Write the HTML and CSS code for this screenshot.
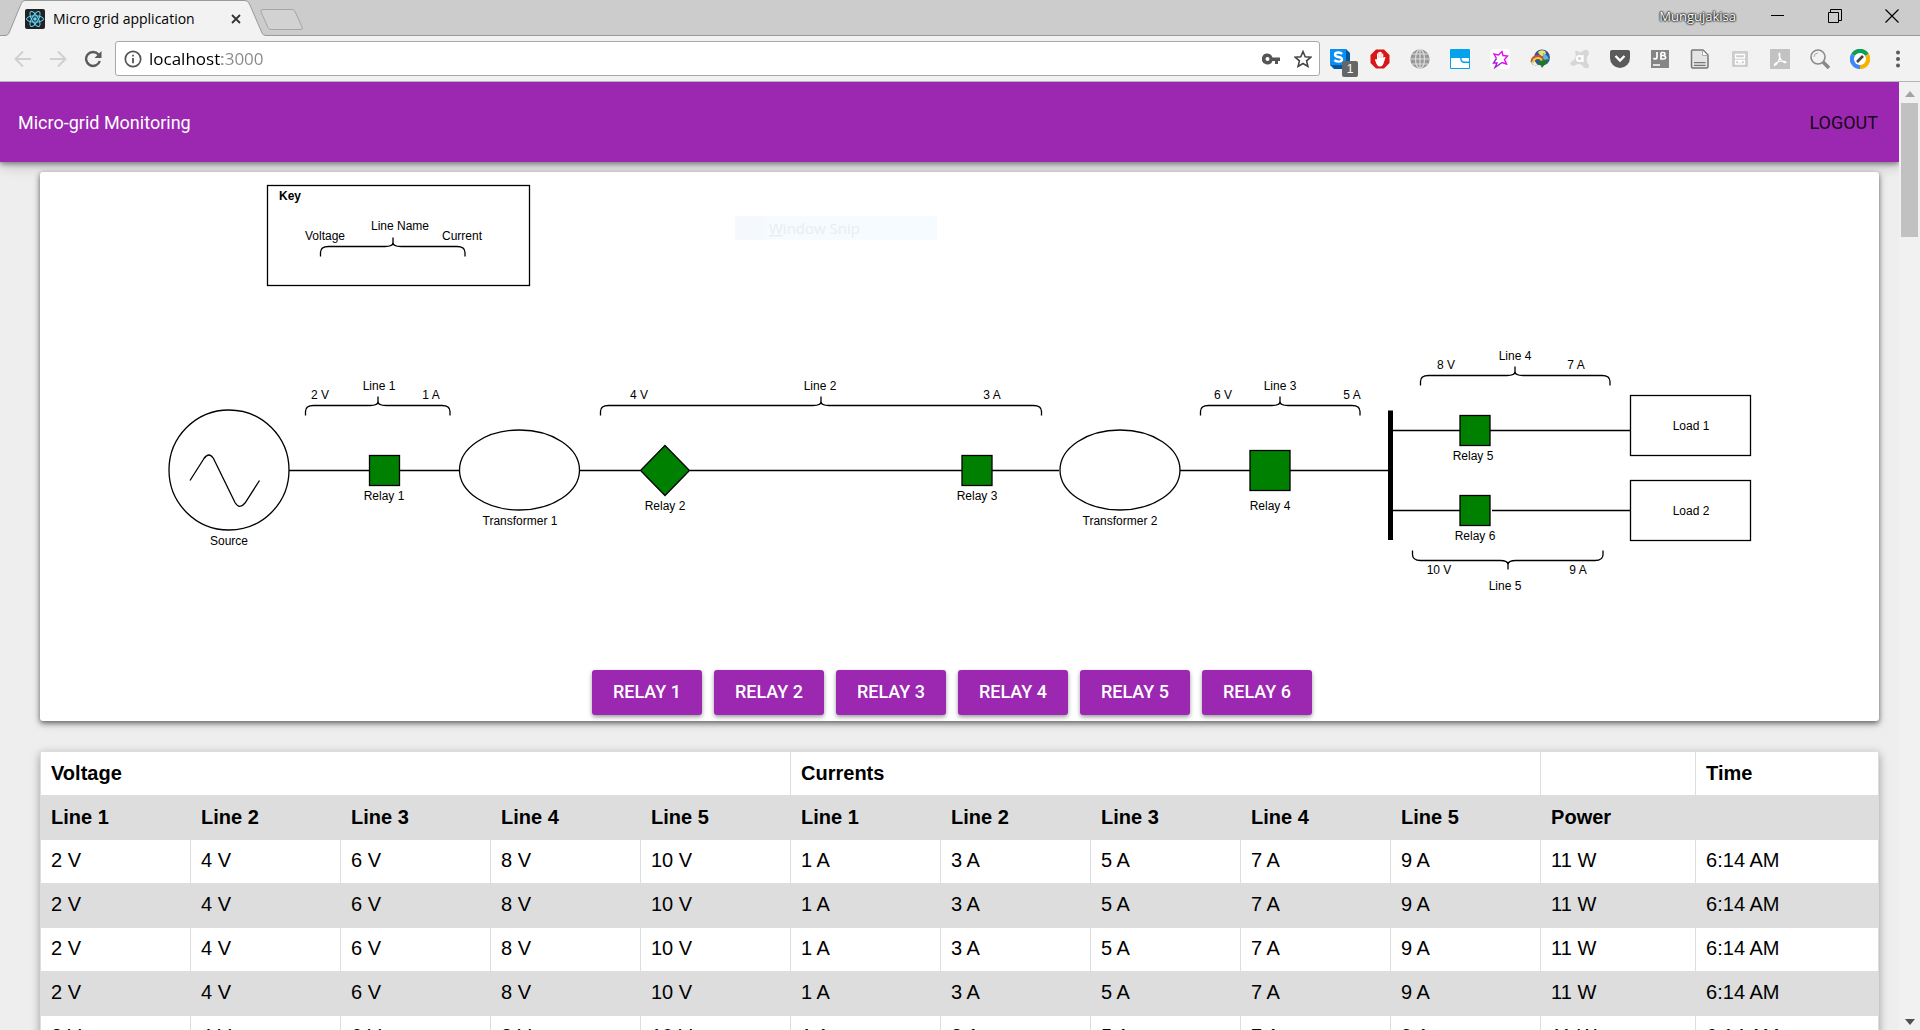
FILE: index.html
```html
<!DOCTYPE html>
<html lang="en">
<head>
<meta charset="utf-8">
<title>Micro grid application</title>
<link rel="stylesheet" href="styles.css">
</head>
<body>
<header class="browser">
  <div class="tabstrip">
    <div class="tab">
      <svg class="tab-shape" width="272" height="36" viewBox="0 0 272 36"><path d="M0 36V35.500H5Q8 35.500 9 33L21 4Q22 .5 25 .5H245Q248 .5 249.500 4L262 33Q263 35.500 266 35.500H272V36Z" fill="#f2f2f2"/><path d="M0 35.500H5Q8 35.500 9 33L21 4Q22 .5 25 .5H245Q248 .5 249.500 4L262 33Q263 35.500 266 35.500H272" fill="none" stroke="#999"/></svg>
      <svg class="favicon" width="20" height="20" viewBox="0 0 20 20"><rect width="20" height="20" rx="2" fill="#222"/><g fill="none" stroke="#61dafb"><ellipse cx="10" cy="10" rx="8.500" ry="3.200"/><ellipse cx="10" cy="10" rx="8.500" ry="3.200" transform="rotate(60 10 10)"/><ellipse cx="10" cy="10" rx="8.500" ry="3.200" transform="rotate(120 10 10)"/></g><circle cx="10" cy="10" r="1.800" fill="#61dafb"/></svg>
      <span class="tab-title">Micro grid application</span>
      <button class="plain" aria-label="Close tab"><svg width="10" height="10" viewBox="0 0 10 10"><path d="M1 1L9 9M9 1L1 9" stroke="#333" stroke-width="1.800"/></svg></button>
    </div>
    <button class="plain new-tab" aria-label="New tab"><svg width="44" height="22" viewBox="0 0 44 22"><path d="M3 .5H32Q34 .5 35 2.500L42 18Q43 20.500 41 20.500H11Q9 20.500 8 18.500L1 3Q0 .5 3 .5Z" fill="#d2d2d2" stroke="#a6a6a6"/></svg></button>
    <span class="user">Mungujakisa</span>
    <div class="window-controls">
      <button class="plain" aria-label="Minimize"><svg width="14" height="14" viewBox="0 0 14 14"><path d="M0 6.500H13" stroke="#000"/></svg></button>
      <button class="plain" aria-label="Restore"><svg width="14" height="14" viewBox="0 0 14 14" fill="none" stroke="#000"><path d="M.5 3.500H10.500V13.500H.5ZM2.500 3V.5H13.500V11.500H11"/></svg></button>
      <button class="plain" aria-label="Close"><svg width="14" height="14" viewBox="0 0 14 14"><path d="M.5 .5L13.500 13.500M13.500 .5L.5 13.500" stroke="#000" stroke-width="1.200"/></svg></button>
    </div>
  </div>
  <div class="toolbar">
    <div class="nav">
      <button class="plain" aria-label="Back"><svg width="18" height="18" viewBox="0 0 18 18" fill="none" stroke="#cfd1d1" stroke-width="2"><path d="M17 9H2M9 1.500L1.500 9L9 16.500"/></svg></button>
      <button class="plain" aria-label="Forward"><svg width="18" height="18" viewBox="0 0 18 18" fill="none" stroke="#cfd1d1" stroke-width="2"><path d="M1 9H16M9 1.500L16.500 9L9 16.500"/></svg></button>
      <button class="plain" aria-label="Reload"><svg width="18" height="18" viewBox="0 0 18 18"><path d="M14.500 4.500A7 7 0 1 0 15.800 11" fill="none" stroke="#5a5a5a" stroke-width="2.400"/><path d="M17.500 1V8H10.500Z" fill="#5a5a5a"/></svg></button>
    </div>
    <div class="omnibox">
      <svg width="18" height="18" viewBox="0 0 18 18"><circle cx="9" cy="9" r="7.700" fill="none" stroke="#555" stroke-width="1.700"/><path d="M9 8V13.300M9 4.700V6.500" stroke="#555" stroke-width="1.800"/></svg>
      <input class="url" type="text" value="localhost:3000" aria-label="Address">
      <svg width="18" height="18" viewBox="0 0 18 18"><path d="M5.500 3.500A5.500 5.500 0 1 0 10.500 11H13V14H16V11H18V7.500H10.500A5.500 5.500 0 0 0 5.500 3.500ZM5.500 7A2 2 0 1 1 5.500 11A2 2 0 0 1 5.500 7Z" fill="#555"/></svg>
      <svg width="18" height="18" viewBox="0 0 18 18"><path d="M9 1.500L11.200 6.700L16.800 7.200L12.600 10.900L13.900 16.400L9 13.500L4.100 16.400L5.400 10.900L1.200 7.200L6.800 6.700Z" fill="none" stroke="#444" stroke-width="1.600"/></svg>
    </div>
    <div class="extensions">
      <div class="ext-badge"><svg width="20" height="20" viewBox="0 0 20 20"><path d="M0 0H16L20 4V20H4L0 16Z" fill="#00579c"/><rect width="16" height="16" fill="#0b8df2"/><path d="M12 5Q11 3.500 8.500 3.500Q5 3.500 5 5.700Q5 7.400 8.500 8Q12 8.600 12 10.500Q12 12.600 8.500 12.600Q5.500 12.600 4.500 11" fill="none" stroke="#fff" stroke-width="2.400"/></svg><span class="badge">1</span></div>
      <svg width="20" height="20" viewBox="0 0 20 20"><path d="M6 .5H14L19.500 6V14L14 19.500H6L.5 14V6Z" fill="#d81616"/><path d="M5 11Q5.500 9.500 7 10.500V4.800Q7.700 3.800 8.400 4.800V3.300Q9.200 2.300 10 3.300V3Q11 2.200 11.600 3.300V4.800Q12.600 3.900 13.300 5V9Q14.500 7.500 15.500 8.500L13.500 14.500Q12.500 17.500 10 17.500Q7.500 17.500 6.500 15Z" fill="#fff"/><path d="M8.600 5V9M10.200 4V9M11.800 5V9" stroke="#e9a0a0" stroke-width=".5"/></svg>
      <svg width="20" height="20" viewBox="0 0 20 20"><circle cx="10" cy="10" r="9.700" fill="#999"/><g fill="none" stroke="#ddd" stroke-width="1.200"><ellipse cx="10" cy="10" rx="4.500" ry="9.500"/><path d="M10 0V20M0 10H20M2 5H18M2 15H18"/></g></svg>
      <svg width="20" height="20" viewBox="0 0 20 20"><rect width="20" height="20" rx="1" fill="#03a2ee"/><path d="M1 9H10Q10.500 14 14 14H19V19H1Z" fill="#fff"/><path d="M11.500 9H19V12.500H14.500Q11.700 12.500 11.500 9Z" fill="#fff"/></svg>
      <svg width="20" height="20" viewBox="0 0 20 20"><rect width="20" height="20" rx="4" fill="#fff"/><path d="M6.500 9.500L4 5L8.500 6L12 2.500L13 6.500L17.500 7L14.500 10.500L16.500 15L12 13.500" fill="none" stroke="#e010e8" stroke-width="1.400"/><path d="M6.500 9.500L3.500 14H7L5 18.500L12 13.500" fill="none" stroke="#a21fd6" stroke-width="1.400"/></svg>
      <svg width="20" height="20" viewBox="0 0 20 20"><circle cx="12" cy="8.500" r="8" fill="#34579b"/><path d="M8 3Q11 0 15 2Q17 5 14 7Q10 8 8 3Z" fill="#e6e26a"/><path d="M13 4Q17 6 19 10Q16 12 13 10Z" fill="#5fb4d8"/><path d="M1.500 13Q2 7 8 7Q12 7 13 10" fill="none" stroke="#d8502a" stroke-width="2"/><path d="M3 14Q4 9 8 9Q11 9 12 12" fill="none" stroke="#f0cd30" stroke-width="2"/><path d="M1 12Q1 17 7 16L10 12L19 10L12 19L10 15Q3 19 1 12Z" fill="#1c7a24"/></svg>
      <svg width="20" height="20" viewBox="0 0 20 20"><path d="M5 3Q6 0 9 3Q11 4 14 1Q18 0 19 3Q19 6 17 8Q16 13 19 16Q19 20 16 19Q13 19 12 16Q8 14 6 16Q2 18 0 15Q0 13 4 11Q7 7 5 3Z" fill="#d6d6d6"/><circle cx="9.500" cy="9.500" r="2.700" fill="none" stroke="#fff" stroke-width="1.800"/><path d="M12.800 6V13" stroke="#fff" stroke-width="1.800"/></svg>
      <svg width="20" height="20" viewBox="0 0 20 20"><path d="M2 1H18Q20 1 20 3V9A10 10 0 0 1 0 9V3Q0 1 2 1Z" fill="#5a5a5a"/><path d="M5.500 7L10 11.500L14.500 7" fill="none" stroke="#fff" stroke-width="2.400"/></svg>
      <svg width="20" height="20" viewBox="0 0 20 20"><rect x="1" y="1" width="18" height="18" fill="#858585"/><path d="M7 3V8Q7 10 5 10Q4 10 3.500 9M11 3.500V10H13.500Q16 10 15.500 8Q15 6.500 13 6.500H11M11 3.500H13.500Q15 3.500 15 5Q15 6.500 13 6.500M3 16H10" fill="none" stroke="#fff" stroke-width="1.700"/></svg>
      <svg width="20" height="20" viewBox="0 0 20 20"><path d="M2.500 1H13L18 6V17.500Q18 19 16.500 19H2.500Q1.500 19 1.500 17.500V2Q1.500 1 2.500 1Z" fill="#e4e4e4" stroke="#777" stroke-width="1.500"/><path d="M12.500 1.500V6.500H17.500" fill="#fff" stroke="#aaa"/><path d="M4 13.500H15.500V16.500H4Z" fill="#ccc"/><path d="M4 13.500H15.500M4 16.500H15.500" stroke="#777"/></svg>
      <svg width="20" height="20" viewBox="0 0 20 20"><rect x="2" y="2" width="16" height="16" rx="1" fill="#cdcdcd"/><path d="M5.500 9V5.500H14.500V9ZM5.500 11.500H14.500V15H5.500ZM8 13H12" fill="none" stroke="#fff" stroke-width="1.300"/></svg>
      <svg width="20" height="20" viewBox="0 0 20 20"><rect width="20" height="20" fill="#c2c2c2"/><path d="M9.500 4Q10.500 8 8.500 12T4.500 16.500Q3.500 15 8 13T16 13Q16 14.500 13.500 13T9.500 8Q8.500 4 9.500 4Z" fill="none" stroke="#fff" stroke-width="1.200"/></svg>
      <svg width="20" height="20" viewBox="0 0 20 20"><path d="M13 13L19 19" stroke="#888" stroke-width="3.500"/><circle cx="8" cy="8" r="7" fill="#f2f2f2" stroke="#8b8b8b" stroke-width="1.600"/><path d="M4 8Q4 4 8 4" fill="none" stroke="#aaa"/></svg>
      <svg width="20" height="20" viewBox="0 0 20 20" fill="none" stroke-width="4.500"><path d="M3.200 6A7.800 7.800 0 0 1 16.800 6" stroke="#0f9d58"/><path d="M16.800 6A7.800 7.800 0 0 1 10 17.800" stroke="#f4b400"/><path d="M10 17.800A7.800 7.800 0 0 1 3.200 6" stroke="#4285f4"/><circle cx="10" cy="10" r="6" fill="#fff"/><path d="M7 13L13 7" stroke="#444" stroke-width="2.600"/></svg>
    </div>
    <button class="plain menu" aria-label="Menu"><svg width="4" height="18" viewBox="0 0 4 18" fill="#5a5a5a"><circle cx="2" cy="2.500" r="2"/><circle cx="2" cy="9" r="2"/><circle cx="2" cy="15.500" r="2"/></svg></button>
  </div>
</header>
<div class="viewport">
  <div class="page">
    <nav class="appbar">
      <span class="brand">Micro-grid Monitoring</span>
      <button class="plain logout">LOGOUT</button>
    </nav>
    <main class="content">
      <section class="card">
        <svg class="diagram" viewBox="40 172 1839 498" role="img" aria-label="Micro grid single line diagram">
          <g class="snip">
            <rect x="735" y="216" width="202" height="24" fill="#f6fbff"/>
            <rect x="735" y="216" width="29" height="24" fill="#f5f9fe"/>
            <text x="769" y="234"><tspan text-decoration="underline">W</tspan>indow Snip</text>
          </g>
          <g class="wire">
            <rect x="267.500" y="185.500" width="262" height="100"/>
            <path d="M320.500 256.500v-4q0-6 8-6H385q8 0 8-4v-5v5q0 4 8 4H457q8 0 8 6v4"/>
            <circle cx="229" cy="470" r="60"/>
            <path d="M190 480.500L204 458.500Q209 451.500 213.500 458.500L235 502.500Q239.500 510 245 503L259.500 480.500"/>
            <path d="M289 470.500H369M400 470.500H459M579 470.500H640M690 470.500H962M992 470.500H1059M1180 470.500H1250M1290 470.500H1388M1392 430.500H1460M1490 430.500H1630M1392 510.500H1460M1492 510.500H1630"/>
            <ellipse cx="519.500" cy="470" rx="60" ry="40"/>
            <ellipse cx="1120" cy="470" rx="60" ry="40"/>
            <path d="M305.500 415.500v-4q0-6 8-6H370q8 0 8-4v-5v5q0 4 8 4H442q8 0 8 6v4"/>
            <path d="M600.500 415.500v-4q0-6 8-6H813q8 0 8-4v-5v5q0 4 8 4H1033.500q8 0 8 6v4"/>
            <path d="M1200.500 415.500v-4q0-6 8-6H1272q8 0 8-4v-5v5q0 4 8 4H1352q8 0 8 6v4"/>
            <path d="M1420.500 385.500v-4q0-6 8-6H1507q8 0 8-4v-5v5q0 4 8 4H1602q8 0 8 6v4"/>
            <path d="M1412.500 550.500v4q0 6 8 6H1500q8 0 8 4v5v-5q0-4 8-4H1595q8 0 8-6v-4"/>
            <rect x="1630.500" y="395.500" width="120" height="60"/>
            <rect x="1630.500" y="480.500" width="120" height="60"/>
            <path class="bus" d="M1390.500 410.500V540"/>
          </g>
          <g class="relay">
            <rect x="369.500" y="455.500" width="30" height="30"/>
            <path d="M665 445.500L689.500 470.500L665 495.500L640.500 470.500Z"/>
            <rect x="962" y="455.500" width="30" height="30"/>
            <rect x="1250" y="450.500" width="40" height="40"/>
            <rect x="1460" y="415.500" width="30" height="30"/>
            <rect x="1460" y="495.500" width="30" height="30"/>
          </g>
          <g class="label">
            <text x="290" y="200" font-weight="bold">Key</text>
            <text x="325" y="240">Voltage</text><text x="400" y="230">Line Name</text><text x="462" y="240">Current</text>
            <text x="229" y="545">Source</text>
            <text x="320" y="399">2 V</text><text x="379" y="390">Line 1</text><text x="431" y="399">1 A</text>
            <text x="384" y="500">Relay 1</text><text x="520" y="525">Transformer 1</text>
            <text x="639" y="399">4 V</text><text x="820" y="390">Line 2</text><text x="992" y="399">3 A</text>
            <text x="665" y="510">Relay 2</text><text x="977" y="500">Relay 3</text><text x="1120" y="525">Transformer 2</text>
            <text x="1223" y="399">6 V</text><text x="1280" y="390">Line 3</text><text x="1352" y="399">5 A</text>
            <text x="1270" y="510">Relay 4</text>
            <text x="1446" y="369">8 V</text><text x="1515" y="360">Line 4</text><text x="1576" y="369">7 A</text>
            <text x="1473" y="460">Relay 5</text><text x="1475" y="540">Relay 6</text>
            <text x="1439" y="574">10 V</text><text x="1505" y="590">Line 5</text><text x="1578" y="574">9 A</text>
            <text x="1691" y="430">Load 1</text><text x="1691" y="515">Load 2</text>
          </g>
        </svg>
        <div class="relay-buttons">
          <button class="raised">RELAY 1</button>
          <button class="raised">RELAY 2</button>
          <button class="raised">RELAY 3</button>
          <button class="raised">RELAY 4</button>
          <button class="raised">RELAY 5</button>
          <button class="raised">RELAY 6</button>
        </div>
      </section>
      <table class="readings">
        <colgroup><col span="10" class="col-line"><col class="col-power"><col></colgroup>
        <thead>
          <tr><th colspan="5">Voltage</th><th colspan="5">Currents</th><th></th><th>Time</th></tr>
          <tr><th>Line 1</th><th>Line 2</th><th>Line 3</th><th>Line 4</th><th>Line 5</th><th>Line 1</th><th>Line 2</th><th>Line 3</th><th>Line 4</th><th>Line 5</th><th>Power</th><th></th></tr>
        </thead>
        <tbody>
          <tr><td>2 V</td><td>4 V</td><td>6 V</td><td>8 V</td><td>10 V</td><td>1 A</td><td>3 A</td><td>5 A</td><td>7 A</td><td>9 A</td><td>11 W</td><td>6:14 AM</td></tr>
          <tr><td>2 V</td><td>4 V</td><td>6 V</td><td>8 V</td><td>10 V</td><td>1 A</td><td>3 A</td><td>5 A</td><td>7 A</td><td>9 A</td><td>11 W</td><td>6:14 AM</td></tr>
          <tr><td>2 V</td><td>4 V</td><td>6 V</td><td>8 V</td><td>10 V</td><td>1 A</td><td>3 A</td><td>5 A</td><td>7 A</td><td>9 A</td><td>11 W</td><td>6:14 AM</td></tr>
          <tr><td>2 V</td><td>4 V</td><td>6 V</td><td>8 V</td><td>10 V</td><td>1 A</td><td>3 A</td><td>5 A</td><td>7 A</td><td>9 A</td><td>11 W</td><td>6:14 AM</td></tr>
          <tr><td>2 V</td><td>4 V</td><td>6 V</td><td>8 V</td><td>10 V</td><td>1 A</td><td>3 A</td><td>5 A</td><td>7 A</td><td>9 A</td><td>11 W</td><td>6:14 AM</td></tr>
        </tbody>
      </table>
    </main>
  </div>
  <div class="scrollbar">
    <svg width="10" height="6" viewBox="0 0 10 6"><path d="M0 6L5 0L10 6Z" fill="#a3a3a3"/></svg>
    <div class="thumb"></div>
    <svg width="10" height="6" viewBox="0 0 10 6"><path d="M0 0L5 6L10 0Z" fill="#505050"/></svg>
  </div>
</div>
</body>
</html>
```

FILE: styles.css
```css
* { box-sizing: border-box; }

body {
  margin: 0;
  height: 100vh;
  display: flex;
  flex-direction: column;
  overflow: hidden;
  background: #eee;
  font-family: "Liberation Sans", Arial, sans-serif;
}

svg { display: block; flex: none; }

.plain {
  padding: 0;
  border: 0;
  background: none;
  font: inherit;
  color: inherit;
}

/* Browser window */
.browser { flex: none; font-family: "Open Sans", sans-serif; }

.tabstrip {
  display: flex;
  height: 36px;
  background: #ccc;
  border-bottom: 1px solid #999;
}

.tab {
  position: relative;
  display: flex;
  align-items: center;
  width: 260px;
  height: 36px;
  padding: 2px 19px 0 25px;
}

.tab > * { position: relative; }

.tab .tab-shape {
  position: absolute;
  left: 0;
  top: 0;
}

.tab-title {
  flex: 1;
  margin-left: 8px;
  padding-bottom: 1px;
  font-size: 14px;
  white-space: nowrap;
}

.new-tab { align-self: flex-start; padding-top: 9px; }

.user {
  margin-left: auto;
  margin-right: 35px;
  line-height: 32px;
  font-size: 13px;
  color: #fff;
  text-shadow: 0 0 2px #000, 0 0 2px #000, 0 0 2px #333;
}

.window-controls {
  display: flex;
  gap: 43px;
  padding: 0 21px 4px 0;
  align-items: center;
}

.toolbar {
  display: flex;
  align-items: center;
  height: 46px;
  background: #f2f2f2;
  border-bottom: 1px solid #b6b4b6;
}

.nav { display: flex; gap: 17px; padding: 0 13px 0 14px; }

.omnibox {
  flex: 1;
  display: flex;
  align-items: center;
  gap: 14px;
  height: 35px;
  padding: 0 7px 0 8px;
  border: 1px solid #a9a9a9;
  border-radius: 3px;
  background: #fff;
}

.url {
  flex: 1;
  min-width: 0;
  margin-left: -7px;
  padding: 0;
  border: 0;
  outline: 0;
  font: 17px "Open Sans", sans-serif;
  color: transparent;
  background: linear-gradient(to right, #000 73px, #888 73px);
  -webkit-background-clip: text;
  background-clip: text;
}

.extensions { display: flex; gap: 20px; margin-left: 10px; }

.ext-badge { position: relative; }

.badge {
  position: absolute;
  left: 12px;
  top: 12px;
  width: 16px;
  height: 16px;
  border-radius: 2px;
  background: #666;
  color: #fff;
  font: 12px/16px "Liberation Sans", sans-serif;
  text-align: center;
}

.menu { margin: 0 20px 0 26px; }

/* Page area */
.viewport {
  flex: 1;
  min-height: 0;
  display: flex;
}

.page { flex: 1; min-width: 0; overflow: hidden; }

.appbar {
  display: flex;
  justify-content: space-between;
  align-items: center;
  height: 80px;
  padding: 0 21px 0 18px;
  background: #9c27b0;
  color: #fff;
  font-family: Roboto, sans-serif;
  font-size: 18px;
  box-shadow: 0 2px 5px rgba(0, 0, 0, .4), 0 4px 14px rgba(0, 0, 0, .2);
}

.logout { color: rgba(0, 0, 0, .87); }

.content { padding: 10px 20px 0 40px; }

.card {
  padding-bottom: 6px;
  border-radius: 3px;
  background: #fff;
  box-shadow: 0 2px 5px rgba(0, 0, 0, .5), 0 3px 10px rgba(0, 0, 0, .2);
}

.diagram { width: 100%; height: auto; }

.wire { fill: none; stroke: #000; stroke-width: 1.3; }
.bus { stroke-width: 5; }
.relay { fill: green; stroke: #000; stroke-width: 1.3; }
.label { font-size: 12px; text-anchor: middle; }
.snip text { font-family: "Open Sans", sans-serif; font-size: 15px; fill: #ebecee; }

.relay-buttons {
  display: flex;
  justify-content: center;
  gap: 12px;
  padding-right: 15px;
}

.raised {
  width: 110px;
  height: 45px;
  padding: 0 0 2px;
  border: 0;
  border-radius: 3px;
  background: #9c27b0;
  color: #fff;
  font: 500 18px Roboto, sans-serif;
  box-shadow: 0 2px 4px rgba(0, 0, 0, .4);
}

.readings {
  width: 100%;
  margin-top: 30px;
  table-layout: fixed;
  border-collapse: collapse;
  background: #fff;
  font-size: 20px;
  line-height: 23px;
  box-shadow: 0 3px 9px rgba(0, 0, 0, .35);
}

.readings th,
.readings td {
  height: 44px;
  padding: 10px;
  border: 1px solid #ddd;
  text-align: left;
}

.readings td { padding: 9px 10px 11px; }

.readings tr:nth-child(even) { background: #ddd; }
.col-line { width: 150px; }
.col-power { width: 155px; }

.scrollbar {
  flex: none;
  display: flex;
  flex-direction: column;
  align-items: center;
  width: 21px;
  padding: 9px 2px 5px;
  background: #f1f1f1;
}

.thumb {
  width: 17px;
  height: 134px;
  margin: 6px 0 auto;
  background: #c1c1c1;
}
```
